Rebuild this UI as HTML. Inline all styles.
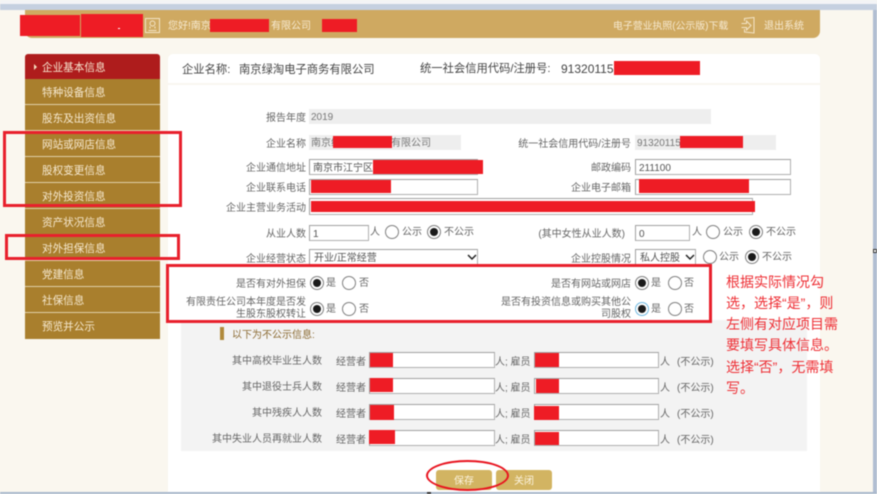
<!DOCTYPE html>
<html lang="zh-CN"><head><meta charset="utf-8"><title>企业基本信息</title>
<style>
*{box-sizing:border-box}
html,body{margin:0;padding:0;width:877px;height:494px;overflow:hidden;background:#faf7ef}
body{position:relative;font-family:"Liberation Sans","Noto Sans CJK SC",sans-serif;font-size:10px;color:#666}
#w{position:absolute;left:0;top:0;width:877px;height:494px;overflow:hidden;filter:blur(.45px)}
.a,.t,.i,.g,.r,.o,.m{position:absolute}
.t{line-height:14px;white-space:nowrap;transform:translateY(2px)}
.i{background:#fff;border:1px solid #b0b0b0;border-top-color:#a0a0a0;border-left-color:#a0a0a0;padding-left:3px;line-height:17px;color:#555;white-space:nowrap}
.g{background:#eee;height:15px;line-height:18px;padding-left:2px;color:#777;white-space:nowrap}
.r{background:#ee1c25}
.o{width:14px;height:14px;border:1px solid #808080;border-radius:50%;background:#fff}
.o.c::after{content:"";position:absolute;left:2px;top:2px;width:8px;height:8px;border-radius:50%;background:#1a1a1a}
.m{left:25px;width:135px;height:26px;background:#a97f2d;border-bottom:1px solid #e0cfa8;color:#f6e9d0;font-size:10.6px;line-height:29px;padding-left:17px;white-space:nowrap}
.b{position:absolute;border:3px solid #e8202c}
.h{color:#f6e9d0}
.n{font-size:14px;color:#ee2f35;left:726px;line-height:20px;transform:none}
.btn{position:absolute;top:470px;width:56px;height:20px;background:#d2b462;border-radius:3px;color:#fbf3df;text-align:center;line-height:24px;font-size:10px}
.hd{font-size:11.3px;color:#444;transform:none}
</style></head><body><div id="w">

<div class="a" style="left:0;top:0;width:877px;height:4px;background:#f3f4f6"></div>
<div class="a" style="left:0;top:4px;width:877px;height:6px;background:#c5d0e0"></div>
<div class="a" style="left:873px;top:10px;width:4px;height:484px;background:#b1bed2"></div>
<div class="a" style="left:0;top:492px;width:877px;height:2px;background:#a9b8cc"></div>

<div class="a" style="left:25px;top:10px;width:795px;height:28px;background:#cfa961;border-radius:0 0 7px 7px"></div>
<div class="r" style="left:20px;top:15px;width:60px;height:21px"></div>
<div class="r" style="left:81px;top:14px;width:62px;height:23px"></div>
<div class="a" style="left:118px;top:28px;width:2px;height:1px;background:#fff"></div>
<svg class="a" style="left:145px;top:18px" width="15" height="15" viewBox="0 0 15 15" fill="none" stroke="#f3e4c6"><rect x=".5" y=".5" width="14" height="14"/><circle cx="7.5" cy="5.5" r="2.5"/><path d="M5 8.500v2M10 8.500v2M3.500 12.500h8"/></svg>
<div class="t h" style="left:168px;top:18px">您好!南京</div>
<div class="r" style="left:210px;top:19px;width:59px;height:13px"></div>
<div class="t h" style="left:271px;top:18px">有限公司</div>
<div class="r" style="left:322px;top:19px;width:35px;height:13px"></div>
<div class="t h" style="left:613px;top:18px;font-size:9.9px">电子营业执照(公示版)下载</div>
<svg class="a" style="left:741px;top:17px" width="14" height="17" viewBox="0 0 14 17" fill="none" stroke="#f3e4c6"><path d="M3.500 4V1.500l9.500-1v15.500l-9.500-1V12"/><path d="M.5 6.500h5V4l4.500 4.500-4.500 4.500v-2.500h-5"/></svg>
<div class="t h" style="left:764px;top:18px">退出系统</div>

<div class="a" style="left:25px;top:54px;width:135px;height:25px;background:#ae1c1c;border-radius:3px 3px 0 0;color:#f8e9d2;font-size:10.6px;line-height:29px;padding-left:17px">企业基本信息</div>
<div class="a" style="left:34px;top:64px;border-left:3px solid #f6e0c0;border-top:3px solid transparent;border-bottom:3px solid transparent"></div>
<div class="m" style="top:79px">特种设备信息</div>
<div class="m" style="top:105px">股东及出资信息</div>
<div class="m" style="top:131px">网站或网店信息</div>
<div class="m" style="top:157px">股权变更信息</div>
<div class="m" style="top:183px">对外投资信息</div>
<div class="m" style="top:209px">资产状况信息</div>
<div class="m" style="top:235px">对外担保信息</div>
<div class="m" style="top:261px">党建信息</div>
<div class="m" style="top:287px">社保信息</div>
<div class="m" style="top:313px;border-bottom:0">预览并公示</div>

<div class="a" style="left:168px;top:54px;width:652px;height:438px;background:#fff;border-radius:5px 5px 0 0"></div>
<div class="a" style="left:168px;top:83px;width:652px;height:2px;background:#f8f6f0"></div>
<div class="t hd" style="left:182px;top:63px">企业名称:</div>
<div class="t hd" style="left:239px;top:63px">南京绿淘电子商务有限公司</div>
<div class="t hd" style="left:420px;top:62px">统一社会信用代码/注册号:</div>
<div class="t hd" style="left:561px;top:62px;font-size:12px">91320115</div>
<div class="r" style="left:614px;top:61px;width:86px;height:14px"></div>

<div class="t" style="right:571px;top:110px">报告年度</div>
<div class="g" style="left:309px;top:109px;width:402px">2019</div>

<div class="t" style="right:571px;top:136px">企业名称</div>
<div class="g" style="left:309px;top:135px;width:152px">南京绿淘电子商务有限公司</div>
<div class="r" style="left:333px;top:136px;width:59px;height:12px"></div>
<div class="t" style="right:246px;top:136px">统一社会信用代码/注册号</div>
<div class="g" style="left:635px;top:135px;width:141px">91320115</div>
<div class="r" style="left:680px;top:136px;width:63px;height:12px"></div>

<div class="t" style="right:571px;top:160px">企业通信地址</div>
<div class="i" style="left:309px;top:159px;width:169px;height:16px">南京市江宁区</div>
<div class="r" style="left:373px;top:160px;width:110px;height:14px"></div>
<div class="t" style="right:246px;top:160px">邮政编码</div>
<div class="i" style="left:635px;top:159px;width:156px;height:16px">211100</div>

<div class="t" style="right:571px;top:180px">企业联系电话</div>
<div class="i" style="left:309px;top:179px;width:169px;height:16px"></div>
<div class="r" style="left:311px;top:180px;width:80px;height:13px"></div>
<div class="t" style="right:246px;top:180px">企业电子邮箱</div>
<div class="i" style="left:635px;top:179px;width:156px;height:16px"></div>
<div class="r" style="left:639px;top:179px;width:110px;height:14px"></div>

<div class="t" style="right:571px;top:200px">企业主营业务活动</div>
<div class="i" style="left:309px;top:198px;width:444px;height:17px"></div>
<div class="r" style="left:311px;top:201px;width:444px;height:11px"></div>

<div class="t" style="right:571px;top:226px">从业人数</div>
<div class="i" style="left:309px;top:225px;width:60px;height:16px;line-height:18px">1</div>
<div class="t" style="left:370px;top:224px">人</div>
<div class="o" style="left:385px;top:225px"></div>
<div class="t" style="left:402px;top:224px">公示</div>
<div class="o c" style="left:427px;top:225px"></div>
<div class="t" style="left:444px;top:224px">不公示</div>
<div class="t" style="right:252px;top:226px">(其中女性从业人数)</div>
<div class="i" style="left:635px;top:225px;width:55px;height:16px;line-height:18px">0</div>
<div class="t" style="left:692px;top:224px">人</div>
<div class="o" style="left:706px;top:225px"></div>
<div class="t" style="left:723px;top:224px">公示</div>
<div class="o c" style="left:749px;top:225px"></div>
<div class="t" style="left:766px;top:224px">不公示</div>

<div class="t" style="right:571px;top:251px">企业经营状态</div>
<div class="i" style="left:309px;top:249px;width:169px;height:17px;line-height:18px;padding-left:4px">开业/正常经营</div>
<svg class="a" style="left:467px;top:254px" width="10" height="7" fill="none" stroke="#222" stroke-width="1.500"><path d="M1 1l4 4 4-4"/></svg>
<div class="t" style="right:246px;top:251px">企业控股情况</div>
<div class="i" style="left:635px;top:249px;width:61px;height:17px;line-height:18px;padding-left:4px">私人控股</div>
<svg class="a" style="left:685px;top:254px" width="10" height="7" fill="none" stroke="#222" stroke-width="1.500"><path d="M1 1l4 4 4-4"/></svg>
<div class="o" style="left:703px;top:250px"></div>
<div class="t" style="left:719px;top:249px">公示</div>
<div class="o c" style="left:745px;top:250px"></div>
<div class="t" style="left:762px;top:249px">不公示</div>

<div class="t" style="right:571px;top:276px">是否有对外担保</div>
<div class="o c" style="left:310px;top:276px"></div><div class="t" style="left:326px;top:275px">是</div>
<div class="o" style="left:342px;top:276px"></div><div class="t" style="left:359px;top:275px">否</div>
<div class="t" style="right:571px;top:295px;line-height:12px;text-align:right">有限责任公司本年度是否发<br>生股东股权转让</div>
<div class="o c" style="left:310px;top:302px"></div><div class="t" style="left:326px;top:301px">是</div>
<div class="o" style="left:342px;top:302px"></div><div class="t" style="left:359px;top:301px">否</div>
<div class="t" style="right:246px;top:276px">是否有网站或网店</div>
<div class="o c" style="left:635px;top:276px"></div><div class="t" style="left:651px;top:275px">是</div>
<div class="o" style="left:668px;top:276px"></div><div class="t" style="left:684px;top:275px">否</div>
<div class="t" style="right:246px;top:295px;line-height:12px;text-align:right">是否有投资信息或购买其他公<br>司股权</div>
<div class="o c" style="left:635px;top:302px;border-color:#6fb8e0"></div><div class="t" style="left:651px;top:301px">是</div>
<div class="o" style="left:668px;top:302px"></div><div class="t" style="left:684px;top:301px">否</div>

<div class="a" style="left:181px;top:320px;width:626px;height:131px;background:#f3f3f3"></div>
<div class="a" style="left:220px;top:327px;width:4px;height:13px;background:#b08a3c"></div>
<div class="t" style="left:232px;top:327px;color:#8b6a32">以下为不公示信息:</div>

<div class="t" style="right:555px;top:353px">其中高校毕业生人数</div>
<div class="t" style="right:555px;top:379px">其中退役士兵人数</div>
<div class="t" style="right:555px;top:405px">其中残疾人人数</div>
<div class="t" style="right:555px;top:431px">其中失业人员再就业人数</div>

<div class="t" style="left:336px;top:354px">经营者</div><div class="i" style="left:369px;top:352px;width:126px;height:16px"></div><div class="r" style="left:370px;top:353px;width:23px;height:14px"></div>
<div class="t" style="left:495px;top:354px">人; 雇员</div><div class="i" style="left:534px;top:352px;width:125px;height:16px"></div><div class="r" style="left:535px;top:353px;width:24px;height:14px"></div>
<div class="t" style="left:660px;top:354px">人</div><div class="t" style="left:677px;top:354px">(不公示)</div>

<div class="t" style="left:336px;top:380px">经营者</div><div class="i" style="left:369px;top:378px;width:126px;height:16px"></div><div class="r" style="left:370px;top:378px;width:23px;height:14px"></div>
<div class="t" style="left:495px;top:380px">人; 雇员</div><div class="i" style="left:534px;top:378px;width:125px;height:16px"></div><div class="r" style="left:536px;top:379px;width:23px;height:14px"></div>
<div class="t" style="left:660px;top:380px">人</div><div class="t" style="left:677px;top:380px">(不公示)</div>

<div class="t" style="left:336px;top:406px">经营者</div><div class="i" style="left:369px;top:404px;width:126px;height:16px"></div><div class="r" style="left:370px;top:405px;width:24px;height:15px"></div>
<div class="t" style="left:495px;top:406px">人; 雇员</div><div class="i" style="left:534px;top:404px;width:125px;height:16px"></div><div class="r" style="left:534px;top:406px;width:25px;height:14px"></div>
<div class="t" style="left:660px;top:406px">人</div><div class="t" style="left:677px;top:406px">(不公示)</div>

<div class="t" style="left:336px;top:432px">经营者</div><div class="i" style="left:369px;top:430px;width:126px;height:16px"></div><div class="r" style="left:369px;top:430px;width:26px;height:14px"></div>
<div class="t" style="left:495px;top:432px">人; 雇员</div><div class="i" style="left:534px;top:430px;width:125px;height:16px"></div><div class="r" style="left:535px;top:432px;width:24px;height:13px"></div>
<div class="t" style="left:660px;top:432px">人</div><div class="t" style="left:677px;top:432px">(不公示)</div>

<div class="btn" style="left:436px">保存</div>
<div class="btn" style="left:496px">关闭</div>
<div class="a" style="left:426px;top:460px;width:83px;height:31px;border:2px solid #e8141f;border-radius:50%"></div>

<div class="b" style="left:3px;top:131px;width:179px;height:76px"></div>
<div class="b" style="left:5px;top:234px;width:175px;height:26px"></div>
<div class="b" style="left:166px;top:264px;width:546px;height:59px"></div>

<div class="t n" style="top:272px">根据实际情况勾</div>
<div class="t n" style="top:293px">选&#65292;选择“是”&#65292;则</div>
<div class="t n" style="top:314px">左侧有对应项目需</div>
<div class="t n" style="top:335px">要填写具体信息。</div>
<div class="t n" style="top:357px">选择“否”&#65292;无需填</div>
<div class="t n" style="top:378px">写。</div>

<div class="a" style="left:427px;top:492px;width:4px;height:2px;background:#fff;border:1px solid #333"></div>
<div class="a" style="left:873px;top:249px;width:4px;height:4px;background:#fff;border:1px solid #333"></div>
</div></body></html>
